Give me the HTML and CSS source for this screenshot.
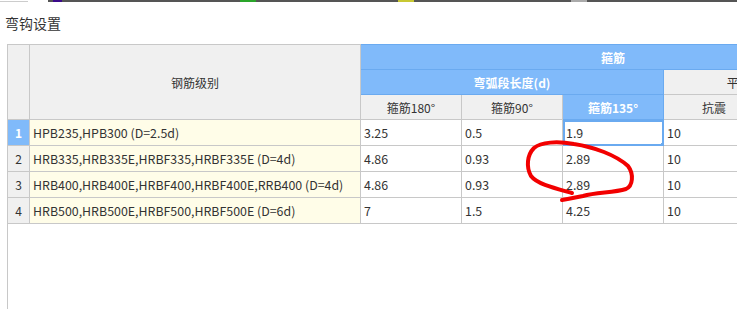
FILE: index.html
```html
<!DOCTYPE html>
<html>
<head>
<meta charset="UTF-8">
<title>弯钩设置</title>
<link rel="stylesheet" href="styles.css">
</head>
<body>
<div class="topbar">
  <span class="tb-left"></span>
  <span class="tb-icon"></span>
  <span class="tb-dark">
    <i class="seg purple" style="margin-left:5px"></i>
    <i class="seg green" style="margin-left:178px"></i>
    <i class="seg yellow" style="margin-left:142px"></i>
    <i class="seg grey" style="margin-left:157px"></i>
  </span>
</div>
<h1 class="title">弯钩设置</h1>
<div class="grid-wrap">
  <table class="grid">
    <colgroup>
      <col class="c-no"><col class="c-name"><col class="c-val"><col class="c-val"><col class="c-val"><col class="c-val"><col class="c-val">
    </colgroup>
    <thead>
      <tr>
        <th rowspan="3" class="hd"></th>
        <th rowspan="3" class="hd">钢筋级别</th>
        <th colspan="5" class="hd-blue">箍筋</th>
      </tr>
      <tr>
        <th colspan="3" class="hd-blue">弯弧段长度(d)</th>
        <th colspan="2" class="hd">平直段长度(d)</th>
      </tr>
      <tr>
        <th class="hd">箍筋180°</th>
        <th class="hd">箍筋90°</th>
        <th class="hd-blue">箍筋135°</th>
        <th class="hd">抗震</th>
        <th class="hd"></th>
      </tr>
    </thead>
    <tbody>
      <tr>
        <td class="no no-sel">1</td>
        <td class="name">HPB235,HPB300 (D=2.5d)</td>
        <td>3.25</td><td>0.5</td><td class="sel">1.9<span class="handle"></span></td><td>10</td><td></td>
      </tr>
      <tr>
        <td class="no">2</td>
        <td class="name">HRB335,HRB335E,HRBF335,HRBF335E (D=4d)</td>
        <td>4.86</td><td>0.93</td><td>2.89</td><td>10</td><td></td>
      </tr>
      <tr>
        <td class="no">3</td>
        <td class="name">HRB400,HRB400E,HRBF400,HRBF400E,RRB400 (D=4d)</td>
        <td>4.86</td><td>0.93</td><td>2.89</td><td>10</td><td></td>
      </tr>
      <tr>
        <td class="no">4</td>
        <td class="name">HRB500,HRB500E,HRBF500,HRBF500E (D=6d)</td>
        <td>7</td><td>1.5</td><td>4.25</td><td>10</td><td></td>
      </tr>
    </tbody>
  </table>
  <svg class="mark" width="120" height="70" viewBox="520 138 120 70">
    <path d="M571 193 C553 188 536 184 530 176 C525 167 526 155 533 148 C540 142 556 141 573 144 C593 147 615 155 627 166 C633 174 632 186 625 189 C612 193 596 192 582 196 C572 198 566 199 561 200" fill="none" stroke="#f20000" stroke-width="4" stroke-linecap="round" stroke-linejoin="round"/>
  </svg>
</div>
</body>
</html>
```

FILE: styles.css
```css
body{margin:0;background:#fff;font-family:"Noto Sans CJK SC","Microsoft YaHei",sans-serif;color:#333;height:309px;overflow:hidden}
.topbar{display:flex;height:2px}
.tb-left{width:28px;border-bottom:1px solid #ccc}
.tb-icon{width:20px}
.tb-dark{flex:1;display:flex;background:#555}
.seg{display:block;width:9px;height:2px}
.purple{background:#3b0a8a}
.green{background:#2aa52a;width:16px}
.yellow{background:#c8c832;width:16px}
.grey{background:#aaa;width:16px}
.title{margin:0;padding:11px 0 0 5px;height:31px;box-sizing:border-box;font-size:14px;font-weight:normal;line-height:20px;color:#333}
.grid-wrap{position:relative;margin:11px 0 0 7px;height:265px;overflow:hidden;border-left:1px solid #c8c8c8}
.grid{border-collapse:collapse;table-layout:fixed;width:858px;font-size:12px;margin-left:-1px}
.c-no{width:22px}
.c-name{width:331px}
.c-val{width:101px}
.grid th,.grid td{border:1px solid #c8c8c8;padding:0 3px;white-space:nowrap;overflow:hidden}
.grid th{height:24px;font-weight:normal;text-align:center}
.hd{background:#f0f0f0;color:#333}
.hd-blue{background:#80bafa;color:#fff;font-weight:bold!important;border-color:#6aaaf0!important}
.grid td{height:25px;text-align:left;background:#fff;font-size:12.4px}
.grid td.no{background:#f0f0f0;text-align:center;padding:0;font-size:12px}
.grid td.no-sel{background:#80bafa;color:#fff;font-weight:bold}
.grid td.name{background:#fffde8}
.grid td.sel{position:relative;outline:2px solid #6aaaf0;outline-offset:-2px}
.handle{position:absolute;right:-3px;bottom:-3px;width:5px;height:5px;background:#6aaaf0}
.mark{position:absolute;left:513px;top:94px}
```
